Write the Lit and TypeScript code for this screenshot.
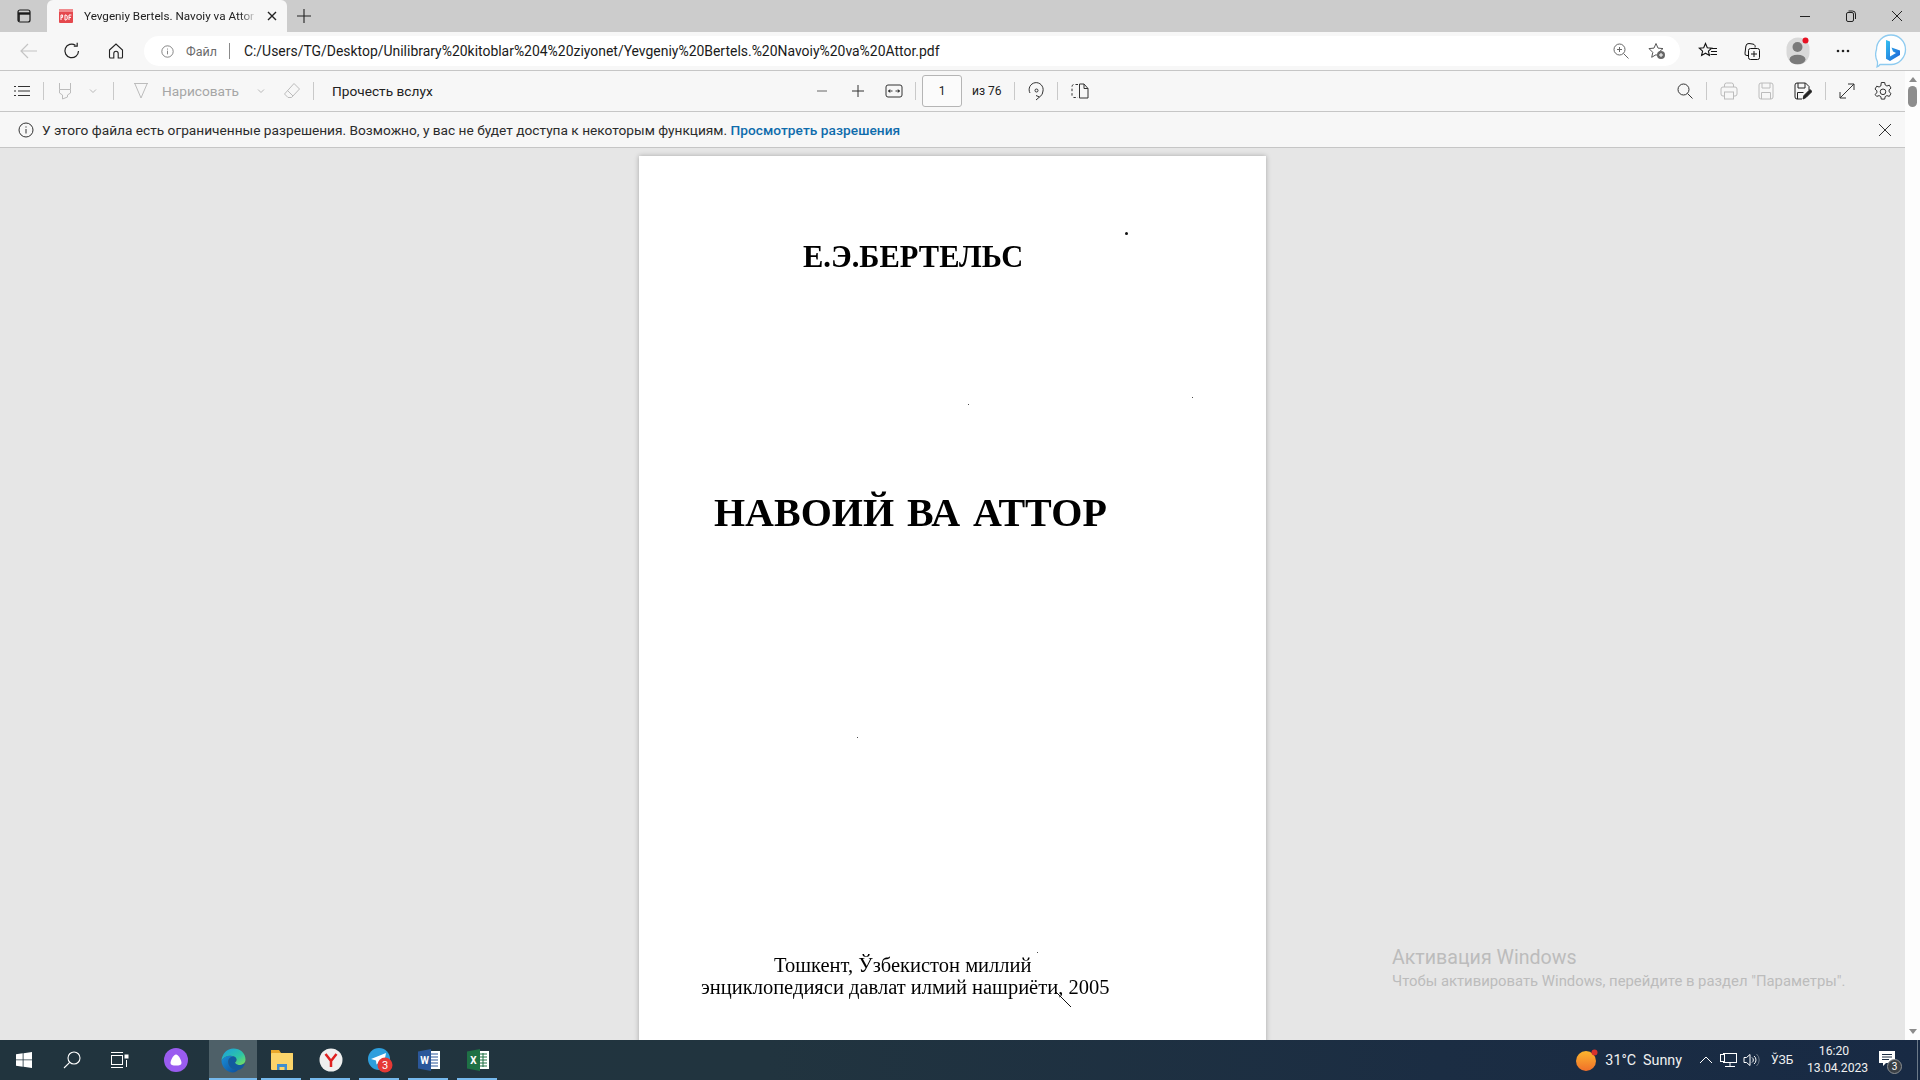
import { LitElement, html, css } from "lit";
import { customElement } from "lit/decorators.js";

const info = (size = 16, color = "#555") => html`<svg width=${size} height=${size} viewBox="0 0 16 16" fill="none" stroke=${color}>
  <circle cx="8" cy="8" r="7"></circle>
  <path d="M8 7v4.5M8 4.4v1.2"></path>
</svg>`;

const chevron = html`<svg width="10" height="10" viewBox="0 0 10 10" fill="none" stroke="#b8b8b8"><path d="M2 3.5l3 3 3-3"></path></svg>`;

@customElement("app-root")
export class AppRoot extends LitElement {
  static styles = css`
    :host {
      display: block;
      width: 1920px;
      height: 1080px;
      overflow: hidden;
      font-family: Roboto, "Liberation Sans", sans-serif;
      color: #222;
      position: relative;
    }
    button {
      all: unset;
      display: flex;
      align-items: center;
      justify-content: center;
    }

    .tabstrip {
      height: 32px;
      background: #ccc;
      display: flex;
      align-items: stretch;
    }
    .sidebar-btn {
      width: 47px;
    }
    .tab {
      width: 240px;
      background: #f7f7f7;
      border-radius: 6px 6px 0 0;
      display: flex;
      align-items: center;
      box-sizing: border-box;
      padding-left: 11px;
    }
    .tab-title {
      width: 173px;
      margin-left: 10px;
      font-size: 11.7px;
      white-space: nowrap;
      -webkit-mask-image: linear-gradient(90deg, #000 90%, transparent);
      mask-image: linear-gradient(90deg, #000 90%, transparent);
    }
    .tab-close {
      margin-left: 10px;
    }
    .new-tab {
      width: 34px;
    }
    .window-btns {
      margin-left: auto;
      display: flex;
    }
    .window-btns button {
      width: 46px;
    }

    .addressbar {
      height: 38px;
      background: #f7f7f7;
      border-bottom: 1px solid #c6c6c6;
      display: flex;
      align-items: center;
    }
    .nav {
      width: 44px;
      height: 30px;
    }
    .nav:first-child {
      width: 50px;
      padding-left: 4px;
      margin-right: -4px;
    }
    .omnibox {
      margin-left: 6px;
      width: 1536px;
      height: 30px;
      background: #fff;
      border-radius: 15px;
      display: flex;
      align-items: center;
      padding-left: 17px;
      box-sizing: border-box;
      flex: none;
    }
    .scheme {
      margin-left: 12px;
      font-size: 12.5px;
      color: #6b6b6b;
    }
    .omni-sep {
      width: 1px;
      height: 16px;
      background: #8a8a8a;
      margin: 0 14px 0 12px;
    }
    .url {
      font-size: 13.95px;
      color: #1a1a1a;
      white-space: nowrap;
    }
    .omni-end {
      margin-left: auto;
      display: flex;
      gap: 12px;
      padding-right: 11px;
    }
    .omni-end button {
      width: 24px;
    }
    .browser-btns {
      display: flex;
      align-items: center;
      margin-left: 5px;
      flex: none;
    }
    .browser-btns button {
      width: 45px;
      height: 36px;
    }
    .browser-btns .collections {
      margin-left: -1px;
      margin-right: 1px;
    }
    .browser-btns .bing {
      margin-left: 3px;
    }

    .body {
      display: flex;
      height: 969px;
    }
    .main {
      width: 1905px;
      display: flex;
      flex-direction: column;
      position: relative;
    }
    .pdfbar {
      height: 40px;
      background: #f7f7f7;
      border-bottom: 1px solid #c6c6c6;
      display: flex;
      align-items: center;
      padding-left: 10px;
      font-size: 13.7px;
      flex: none;
    }
    .pdfbar button {
      width: 24px;
      height: 24px;
      flex: none;
    }
    .sep {
      width: 1px;
      height: 18px;
      background: #c9c9c9;
      margin: 0 9px;
      flex: none;
    }
    .pdfbar .chev {
      width: 16px;
      margin: 0 3px 0 8px;
    }
    .pdfbar .draw {
      margin-left: 6px;
    }
    .draw-label {
      width: 76px;
      margin-left: 9px;
      color: #a6a6a6;
      white-space: nowrap;
    }
    .pdfbar .chev-draw {
      margin: 0 0 0 15px;
    }
    .pdfbar .eraser {
      margin-left: 11px;
    }
    .read {
      margin-left: 9px;
      width: 400px;
      white-space: nowrap;
    }
    .pdfbar .minus {
      margin-left: 78px;
    }
    .pdfbar .plus,
    .pdfbar .fit {
      margin-left: 12px;
    }
    .page-input {
      width: 40px;
      height: 32px;
      box-sizing: border-box;
      border: 1px solid #b5b5b5;
      border-radius: 3px;
      background: #fbfbfb;
      display: flex;
      align-items: center;
      justify-content: center;
      font-size: 12px;
      margin-left: -3px;
      flex: none;
    }
    .page-total {
      width: 33px;
      margin-left: 10px;
      font-size: 12px;
      white-space: nowrap;
    }
    .pdfbar .view {
      margin-left: 1px;
    }
    .pdf-right {
      margin-left: auto;
      display: flex;
      align-items: center;
      padding-right: 10px;
    }
    .pdfbar .print {
      margin-right: 1px;
    }
    .pdf-right .gap {
      margin-left: 12px;
    }
    .pdfbar .save {
      margin-right: 1px;
    }
    .pdfbar .save-as {
      margin-right: 1px;
    }
    .pdf-right .search-sep {
      margin-right: 10px;
    }

    .infobar {
      height: 35px;
      background: #f7f7f7;
      border-bottom: 1px solid #c6c6c6;
      display: flex;
      align-items: center;
      padding-left: 18px;
      font-size: 13.7px;
      flex: none;
      color: #2b2b2b;
    }
    .infobar span {
      margin-left: 8px;
      white-space: nowrap;
    }
    .infobar a {
      color: #0f6cac;
      font-weight: 500;
      letter-spacing: 0.05px;
    }
    .info-close {
      margin-left: auto;
      width: 16px;
      margin-right: 12px;
    }

    .viewer {
      flex: 1;
      background: #e6e6e6;
      display: flex;
      justify-content: center;
      padding: 8px 0 0 0;
      overflow: hidden;
    }
    .page {
      width: 627px;
      height: 1000px;
      flex: none;
      background: #fff;
      box-shadow: 0 0 5px rgba(0, 0, 0, 0.28);
      position: relative;
      font-family: "Liberation Serif", serif;
      color: #000;
      display: flex;
      flex-direction: column;
      box-sizing: border-box;
      padding-top: 83px;
    }
    .author {
      margin-left: 164px;
      font-size: 30.5px;
      line-height: 36px;
      font-weight: bold;
      white-space: nowrap;
      filter: blur(0.3px);
    }
    .book {
      margin: 215px 0 0 75px;
      font-size: 40px;
      line-height: 46px;
      font-weight: bold;
      white-space: nowrap;
      word-spacing: 3px;
      filter: blur(0.3px);
    }
    .imprint {
      margin-top: 419px;
      font-size: 20.5px;
      line-height: 21.5px;
      white-space: nowrap;
      filter: blur(0.35px);
    }
    .imprint div:first-child {
      margin-left: 135px;
    }
    .imprint div:last-child {
      margin-left: 62px;
    }
    .speck {
      position: absolute;
      background: #111;
      border-radius: 50%;
    }
    .slash {
      position: absolute;
      left: 415px;
      top: 834px;
    }
    .watermark {
      position: absolute;
      left: 1392px;
      top: 874px;
      color: #bcbcbc;
      pointer-events: none;
      white-space: nowrap;
    }
    .wm-title {
      font-size: 19.6px;
      line-height: 26px;
    }
    .wm-sub {
      font-size: 14.85px;
      line-height: 20px;
    }

    .scrollbar {
      width: 15px;
      background: #fdfdfd;
      display: flex;
      flex-direction: column;
      align-items: center;
      position: relative;
    }
    .scroll-up {
      margin-top: 6px;
      width: 0;
      height: 0;
      border: 4px solid transparent;
      border-top: 0;
      border-bottom: 5px solid #8c8c8c;
    }
    .thumb {
      margin-top: 4px;
      width: 9px;
      height: 21px;
      background: #8d8d8d;
      border-radius: 5px;
    }
    .scroll-down {
      margin-top: auto;
      margin-bottom: 6px;
      width: 0;
      height: 0;
      border: 4px solid transparent;
      border-bottom: 0;
      border-top: 5px solid #8c8c8c;
    }

    .taskbar {
      height: 40px;
      background: linear-gradient(90deg, #21343e 0%, #21343f 40%, #1b2d43 75%, #182a44 100%);
      display: flex;
      align-items: stretch;
      color: #f0f0f0;
      font-size: 14.3px;
    }
    .tb-btn {
      width: 48px;
      flex: none;
    }
    .tb-alice {
      margin-left: 8px;
    }
    .tb-app {
      width: 49px;
      flex: none;
      position: relative;
    }
    .tb-app::after {
      content: "";
      position: absolute;
      left: 4px;
      right: 5px;
      bottom: 0;
      height: 2px;
      background: #76b9ed;
    }
    .tb-edge {
      width: 48px;
      margin-left: 9px;
      background: #4e6068;
    }
    .tb-edge::after {
      left: 0;
      right: 0;
    }
    .tray {
      margin-left: auto;
      display: flex;
      align-items: center;
    }
    .weather {
      margin-right: 7px;
    }
    .temp {
      margin-right: 7px;
      white-space: nowrap;
    }
    .sunny {
      margin-right: 12px;
      white-space: nowrap;
    }
    .tray-ico {
      width: 23px;
      flex: none;
    }
    .lang {
      margin-left: 8px;
      font-size: 12px;
      width: 22px;
      white-space: nowrap;
    }
    .clock {
      width: 54px;
      margin-left: 14px;
      text-align: center;
      font-size: 12.2px;
      line-height: 17px;
      white-space: nowrap;
    }
    .notif {
      width: 40px;
      margin: 0 10px 0 6px;
      position: relative;
      flex: none;
      align-self: stretch;
    }
    .notif svg {
      margin-bottom: 3px;
    }
    .notif-badge {
      position: absolute;
      left: 20px;
      top: 19px;
      width: 15px;
      height: 15px;
      box-sizing: border-box;
      border-radius: 50%;
      background: #3a3f45;
      border: 1px solid #8b8f93;
      color: #fff;
      font-size: 10px;
      line-height: 13px;
      text-align: center;
    }
    .show-desktop {
      width: 1px;
      align-self: stretch;
      background: #6c7a89;
      margin-right: 2px;
    }
  `;

  render() {
    return html`
      ${this.renderTabs()} ${this.renderAddress()}
      <div class="body">
        <div class="main">
          ${this.renderPdfBar()} ${this.renderInfo()}
          <div class="viewer">${this.renderPage()}</div>
          <div class="watermark">
            <div class="wm-title">Активация Windows</div>
            <div class="wm-sub">Чтобы активировать Windows, перейдите в раздел "Параметры".</div>
          </div>
        </div>
        <div class="scrollbar">
          <div class="scroll-up"></div>
          <div class="thumb"></div>
          <div class="scroll-down"></div>
        </div>
      </div>
      ${this.renderTaskbar()}
    `;
  }

  renderTabs() {
    return html`<div class="tabstrip">
      <button class="sidebar-btn">
        <svg width="14" height="14" viewBox="0 0 14 14" fill="none" stroke="#1a1a1a" stroke-width="1.2">
          <rect x="1" y="1" width="12" height="12" rx="2"></rect>
          <path d="M1 4.5h12" stroke-width="2.4"></path>
          <path d="M2 4v8" stroke-width="1.6"></path>
        </svg>
      </button>
      <div class="tab">
        <svg width="16" height="16" viewBox="0 0 16 16">
          <path d="M1 2a1 1 0 0 1 1-1h12a1 1 0 0 1 1 1v12a1 1 0 0 1-1 1H2a1 1 0 0 1-1-1z" fill="#e5484d"></path>
          <rect x="1" y="1" width="14" height="3" fill="#f08a8d"></rect>
          <path d="M3 7v5M3 7h1.6v2.4H3M7 7v5h1.2l1-1v-3l-1-1zM11 7v5M11 7h2.4M11 9.4h2" fill="none" stroke="#fff" stroke-width="1"></path>
        </svg>
        <div class="tab-title">Yevgeniy Bertels. Navoiy va Attor</div>
        <button class="tab-close">
          <svg width="10" height="10" viewBox="0 0 10 10" stroke="#222" stroke-width="1.4"><path d="M1 1l8 8M9 1l-8 8"></path></svg>
        </button>
      </div>
      <button class="new-tab">
        <svg width="16" height="16" viewBox="0 0 16 16" stroke="#222" stroke-width="1.1"><path d="M8 1v14M1 8h14"></path></svg>
      </button>
      <div class="window-btns">
        <button><svg width="10" height="10" viewBox="0 0 10 10" stroke="#222"><path d="M0 5.5h10"></path></svg></button>
        <button>
          <svg width="10" height="12" viewBox="0 0 10 12" fill="none" stroke="#222">
            <rect x="0.5" y="2.5" width="7" height="9" rx="1.5"></rect>
            <path d="M2.5 1h4a3 3 0 0 1 3 3v5"></path>
          </svg>
        </button>
        <button><svg width="12" height="12" viewBox="0 0 12 12" stroke="#222"><path d="M1 1l10 10M11 1L1 11"></path></svg></button>
      </div>
    </div>`;
  }

  renderAddress() {
    return html`<div class="addressbar">
      <button class="nav">
        <svg width="18" height="16" viewBox="0 0 18 16" fill="none" stroke="#c4c4c4" stroke-width="1.2"><path d="M17 8H1M8 1L1 8l7 7"></path></svg>
      </button>
      <button class="nav">
        <svg width="18" height="18" viewBox="0 0 18 18" fill="none" stroke="#222" stroke-width="1.2">
          <path d="M15.5 9A6.8 6.8 0 1 1 12.4 3.2"></path>
          <path d="M12.8 0.8v3.4H9.4" transform="translate(1.4 0)"></path>
        </svg>
      </button>
      <button class="nav">
        <svg width="16" height="16" viewBox="0 0 16 16" fill="none" stroke="#222" stroke-width="1.1">
          <path d="M1.5 7L8 1l6.5 6v7a1 1 0 0 1-1 1H10.2v-4.5a2.2 2.2 0 0 0-4.4 0V15H2.5a1 1 0 0 1-1-1z"></path>
        </svg>
      </button>
      <div class="omnibox">
        ${info(13, "#6b6b6b")}
        <span class="scheme">Файл</span>
        <span class="omni-sep"></span>
        <span class="url">C:/Users/TG/Desktop/Unilibrary%20kitoblar%204%20ziyonet/Yevgeniy%20Bertels.%20Navoiy%20va%20Attor.pdf</span>
        <div class="omni-end">
          <button>
            <svg width="16" height="16" viewBox="0 0 16 16" fill="none" stroke="#666">
              <circle cx="6.5" cy="6.5" r="5.5"></circle>
              <path d="M10.5 10.5L15.5 15.5M4 6.5h5M6.5 4v5"></path>
            </svg>
          </button>
          <button>
            <svg width="18" height="18" viewBox="0 0 18 18">
              <path d="M8 1.5l2 4.6 5 .5-3.8 3.3 1.1 4.9L8 12.7l-4.300 2.600 1.100-4.900L1 6.600l5-.5z" fill="none" stroke="#555"></path>
              <circle cx="13" cy="13" r="4" fill="#666"></circle>
              <path d="M13 11v4M11 13h4" stroke="#fff"></path>
            </svg>
          </button>
        </div>
      </div>
      <div class="browser-btns">
        <button>
          <svg width="20" height="18" viewBox="0 0 20 18" fill="none" stroke="#111">
            <path d="M7.500 1.500l1.800 4.200 4.400.4-3.300 3 1 4.400-3.900-2.300-3.900 2.300 1-4.400-3.300-3 4.400-.4z" stroke-width="1.100"></path>
            <path d="M14 6.500h5M13 9.500h6M12.500 12.500h6.500"></path>
          </svg>
        </button>
        <button class="collections">
          <svg width="18" height="20" viewBox="0 0 18 20" fill="none" stroke="#111">
            <rect x="5.500" y="7.500" width="11" height="11" rx="2"></rect>
            <path d="M11 10v6M8 13h6M5.500 14.500H4a2 2 0 0 1-2-2.400l.9-7.100A3 3 0 0 1 6 2.500l4 .6a2.500 2.500 0 0 1 2 3.400"></path>
          </svg>
        </button>
        <button>
          <svg width="24" height="28" viewBox="0 0 24 28">
            <rect x="0.5" y="0.5" width="23" height="27" rx="11.500" fill="#d9d9d9"></rect>
            <circle cx="11.500" cy="10" r="5" fill="#7a7a7a"></circle>
            <ellipse cx="11.500" cy="22.500" rx="8" ry="4.800" fill="#7a7a7a"></ellipse>
            <circle cx="19.500" cy="3.500" r="3" fill="#e81123"></circle>
          </svg>
        </button>
        <button>
          <svg width="14" height="4" viewBox="0 0 14 4" fill="#222"><circle cx="2" cy="2" r="1.300"></circle><circle cx="7" cy="2" r="1.300"></circle><circle cx="12" cy="2" r="1.300"></circle></svg>
        </button>
        <button class="bing">
          <svg width="32" height="34" viewBox="0 0 32 34">
            <defs>
              <linearGradient id="bing" x1="0" y1="0" x2="1" y2="1">
                <stop offset="0" stop-color="#35c1f1"></stop>
                <stop offset="1" stop-color="#1a5fd6"></stop>
              </linearGradient>
            </defs>
            <path d="M16 1c8 0 14.500 6.500 14.500 14.500S24 30.500 16 30.500H5c-1.500 2-3 2.500-3 2.500s.8-3 .4-5.500A15 15 0 0 1 1.500 15.500C1.500 7.500 8 1 16 1z" fill="#fff" stroke="#8ecbf0" stroke-width="1.300"></path>
            <path d="M11 6l4 1.500v15l6-3.500-3-1.500-1.500-4 8.500 3v4.500L15 27l-4-2.200z" fill="url(#bing)"></path>
          </svg>
        </button>
      </div>
    </div>`;
  }

  renderPdfBar() {
    return html`<div class="pdfbar">
      <button>
        <svg width="16" height="12" viewBox="0 0 16 12" stroke="#333"><path d="M0 1.500h2M4 1.500h12M0 6h2M4 6h12M0 10.500h2M4 10.500h12"></path></svg>
      </button>
      <span class="sep"></span>
      <button>
        <svg width="16" height="18" viewBox="0 0 16 18" fill="none" stroke="#bcbcbc">
          <path d="M2.500 1v6.500h11V1M2.500 7.500v3.500L5.500 13v4l5-2v-2l3-2V7.500"></path>
        </svg>
      </button>
      <button class="chev">${chevron}</button>
      <span class="sep"></span>
      <button class="draw">
        <svg width="16" height="18" viewBox="0 0 16 18" fill="none" stroke="#bcbcbc"><path d="M1 1.500h14M2 2l6 14 6-14"></path></svg>
      </button>
      <span class="draw-label">Нарисовать</span>
      <button class="chev chev-draw">${chevron}</button>
      <button class="eraser">
        <svg width="18" height="18" viewBox="0 0 18 18" fill="none" stroke="#bcbcbc">
          <path d="M11 1.500l5.500 5.500-8 8.500H5L1.500 12zM4.500 8.500L10 14"></path>
        </svg>
      </button>
      <span class="sep"></span>
      <span class="read">Прочесть вслух</span>
      <button class="minus">
        <svg width="12" height="12" viewBox="0 0 12 12" stroke="#666"><path d="M1 6h10"></path></svg>
      </button>
      <button class="plus">
        <svg width="14" height="14" viewBox="0 0 14 14" stroke="#333"><path d="M7 1v12M1 7h12"></path></svg>
      </button>
      <button class="fit">
        <svg width="18" height="14" viewBox="0 0 18 14" fill="none" stroke="#333">
          <rect x="1" y="1" width="16" height="12" rx="2"></rect>
          <path d="M3.500 7h4M10.500 7h4" stroke-width="1"></path>
          <path d="M5 5.500L3.500 7 5 8.500M13 5.500L14.500 7 13 8.500" fill="#333"></path>
        </svg>
      </button>
      <span class="sep"></span>
      <div class="page-input">1</div>
      <span class="page-total">из 76</span>
      <span class="sep"></span>
      <button>
        <svg width="18" height="20" viewBox="0 0 18 20" fill="none" stroke="#333">
          <path d="M3 12A7 7 0 1 1 16 10a7 7 0 0 1-3.500 6"></path>
          <path d="M9 19l3.500-3-3.500-1.500"></path>
          <circle cx="9.500" cy="9.500" r="1.500"></circle>
        </svg>
      </button>
      <span class="sep"></span>
      <button class="view">
        <svg width="18" height="16" viewBox="0 0 18 16" fill="none" stroke="#333">
          <path d="M7 1.500H3a2 2 0 0 0-2 2v9a2 2 0 0 0 2 2h4" stroke-dasharray="2.500 2"></path>
          <path d="M8.500 1v14H17V5.500L13 1zM13 1v4.500h4"></path>
        </svg>
      </button>
      <div class="pdf-right">
        <button>
          <svg width="16" height="16" viewBox="0 0 16 16" fill="none" stroke="#333">
            <circle cx="6.500" cy="6.500" r="5.500"></circle>
            <path d="M10.500 10.500L15.500 15.500"></path>
          </svg>
        </button>
        <span class="sep search-sep"></span>
        <button class="print">
          <svg width="18" height="18" viewBox="0 0 18 18" fill="none" stroke="#bcbcbc">
            <path d="M4.500 5V3a2 2 0 0 1 2-2h5a2 2 0 0 1 2 2v2"></path>
            <path d="M4.500 14H3a2 2 0 0 1-2-2V7a2 2 0 0 1 2-2h12a2 2 0 0 1 2 2v5a2 2 0 0 1-2 2h-1.500"></path>
            <rect x="4.500" y="10" width="9" height="7"></rect>
          </svg>
        </button>
        <button class="gap save">
          <svg width="16" height="18" viewBox="0 0 16 18" fill="none" stroke="#bcbcbc">
            <path d="M1 3a2 2 0 0 1 2-2h10a2 2 0 0 1 2 2v12a2 2 0 0 1-2 2H3a2 2 0 0 1-2-2z"></path>
            <path d="M4 1v5h8V1M3.500 17v-6.500h9V17"></path>
          </svg>
        </button>
        <button class="gap save-as">
          <svg width="18" height="18" viewBox="0 0 18 18" fill="none" stroke="#222">
            <path d="M8 17H3a2 2 0 0 1-2-2V3a2 2 0 0 1 2-2h8.500L15 4.500V8"></path>
            <path d="M4 1v5h7V1M3.500 17v-6.500h6"></path>
            <path d="M9 17l1-3.500 6-6 2 2-6 6z" fill="#222"></path>
          </svg>
        </button>
        <span class="sep"></span>
        <button>
          <svg width="16" height="16" viewBox="0 0 16 16" fill="none" stroke="#333"><path d="M1 15L15 1M9 1h6v6M1 9v6h6"></path></svg>
        </button>
        <button class="gap">
          <svg width="20" height="20" viewBox="0 0 20 20" fill="none" stroke="#333">
            <path d="M8.300 1.500h3.400l.5 2.500 1.700 1 2.400-.8 1.700 2.900-1.900 1.700v2l1.900 1.700-1.700 2.900-2.400-.8-1.700 1-.5 2.500H8.300l-.5-2.500-1.700-1-2.400.8L2 13.500l1.900-1.700v-2L2 8.100l1.700-2.900 2.400.8 1.700-1z"></path>
            <circle cx="10" cy="10.800" r="2.800"></circle>
          </svg>
        </button>
      </div>
    </div>`;
  }

  renderInfo() {
    return html`<div class="infobar">
      ${info(16, "#333")}
      <span>У этого файла есть ограниченные разрешения. Возможно, у вас не будет доступа к некоторым функциям. <a>Просмотреть разрешения</a></span>
      <button class="info-close">
        <svg width="14" height="14" viewBox="0 0 14 14" stroke="#333"><path d="M1 1l12 12M13 1L1 13"></path></svg>
      </button>
    </div>`;
  }

  renderPage() {
    const specks = [
      [486, 76, 3],
      [329, 248, 1],
      [553, 241, 1],
      [218, 581, 1],
      [398, 796, 1],
    ];
    return html`<div class="page">
      <div class="author">Е.Э.БЕРТЕЛЬС</div>
      <div class="book">НАВОИЙ ВА АТТОР</div>
      <div class="imprint">
        <div>Тошкент, Ўзбекистон миллий</div>
        <div>энциклопедияси давлат илмий нашриёти, 2005</div>
      </div>
      ${specks.map(
        ([x, y, d]) =>
          html`<span class="speck" style="left:${x}px;top:${y}px;width:${d}px;height:${d}px"></span>`,
      )}
      <svg class="slash" width="20" height="20" viewBox="0 0 20 20" fill="none" stroke="#111"><path d="M1 1l16 16"></path></svg>
    </div>`;
  }

  renderTaskbar() {
    return html`<div class="taskbar">
      <button class="tb-btn">
        <svg width="16" height="16" viewBox="0 0 16 16" fill="#fff"><path d="M0 2.300L6.700 1.300V7.500H0zM7.500 1.200L16 0V7.500H7.500zM0 8.300H6.700V14.700L0 13.700zM7.500 8.300H16V16L7.500 14.800z"></path></svg>
      </button>
      <button class="tb-btn">
        <svg width="18" height="18" viewBox="0 0 18 18" fill="none" stroke="#fff" stroke-width="1.100"><circle cx="11" cy="7" r="6"></circle><path d="M6.700 11.300L1 17"></path></svg>
      </button>
      <button class="tb-btn">
        <svg width="18" height="16" viewBox="0 0 18 16" fill="none" stroke="#fff">
          <path d="M0 .5h12M0 15.500h12"></path>
          <rect x=".5" y="3.500" width="11" height="9"></rect>
          <rect x="14" y="3" width="3" height="3" fill="#fff"></rect>
          <path d="M15.500 8v7"></path>
        </svg>
      </button>
      <button class="tb-btn tb-alice">
        <svg width="24" height="24" viewBox="0 0 24 24">
          <circle cx="12" cy="12" r="12" fill="#9a5cf0"></circle>
          <path d="M12 6.500c2.500 0 5.500 6 5.500 8.500 0 2-2 2.500-5.500 2.500S6.500 17 6.500 15c0-2.500 3-8.500 5.500-8.500z" fill="#fff"></path>
        </svg>
      </button>
      <button class="tb-app tb-edge">
        <svg width="25" height="25" viewBox="0 0 25 25">
          <defs>
            <linearGradient id="edgeA" x1="0" y1="0" x2="1" y2="1">
              <stop offset="0" stop-color="#1b9de2"></stop>
              <stop offset=".6" stop-color="#2dc5a5"></stop>
              <stop offset="1" stop-color="#7fe05a"></stop>
            </linearGradient>
            <linearGradient id="edgeB" x1="0" y1="0" x2="1" y2="1">
              <stop offset="0" stop-color="#1a8fd8"></stop>
              <stop offset="1" stop-color="#0c4f9e"></stop>
            </linearGradient>
          </defs>
          <path d="M12.500 .5C19 .5 24.500 5 24.500 11.500c0 4-3.500 5.500-6.500 5.500s-4-1-4-2.500c2-1 2.500-4-1-6C9 6.500 3 8 .5 12.500 1 6 6 .5 12.500 .5z" fill="url(#edgeA)"></path>
          <path d="M.5 12.500C3 8 9 6.500 13 8.500c-4 0-6.500 3-5.500 7 1 4.500 5.500 7 9.500 6.500-1.500 1.500-3 2.500-5 2.500C6 24.500 .5 19 .5 12.500z" fill="url(#edgeB)"></path>
          <path d="M14 14.500c.5 2 3 2.500 5 2.500 2 0 4-.5 5-2-.5 3-3.500 7-7 7-4 .5-8.500-2-9.500-6.500-1-4 1.500-7 5.500-7 3 1 3 3.500 1 6z" fill="#125a9f"></path>
        </svg>
      </button>
      <button class="tb-app">
        <svg width="24" height="22" viewBox="0 0 24 22">
          <path d="M1 1h8l2 3h12v4H1z" fill="#e9a82b"></path>
          <rect x="1" y="4" width="22" height="17" rx="1" fill="#fbd46a"></rect>
          <path d="M7 21v-6h10v6h-2.500v-3h-5v3z" fill="#3f8ecf"></path>
        </svg>
      </button>
      <button class="tb-app">
        <svg width="24" height="24" viewBox="0 0 24 24">
          <circle cx="12" cy="12" r="11.500" fill="#efefef"></circle>
          <path d="M6.500 6l5.500 7v6M17.500 6L12 13" fill="none" stroke="#e02020" stroke-width="2.500"></path>
        </svg>
      </button>
      <button class="tb-app">
        <svg width="26" height="26" viewBox="0 0 26 26">
          <circle cx="12" cy="12" r="11" fill="#2e9fdd"></circle>
          <path d="M4 12l15-6-2.500 13-4.500-3.500-2.500 2-.5-4z" fill="#fff"></path>
          <circle cx="18" cy="18" r="7.500" fill="#e53935"></circle>
          <text x="18" y="22" font-size="11" text-anchor="middle" fill="#fff" font-family="Roboto, sans-serif">3</text>
        </svg>
      </button>
      <button class="tb-app">
        <svg width="22" height="22" viewBox="0 0 22 22">
          <rect x="9" y="2" width="13" height="18" fill="#fff"></rect>
          <path d="M12 5h8M12 8h8M12 11h8M12 14h8M12 17h8" stroke="#2b579a"></path>
          <path d="M0 2.500L13 0v22L0 19.500z" fill="#2b579a"></path>
          <text x="6.500" y="15" font-size="10" font-weight="bold" text-anchor="middle" fill="#fff" font-family="Roboto, sans-serif">W</text>
        </svg>
      </button>
      <button class="tb-app">
        <svg width="22" height="22" viewBox="0 0 22 22">
          <rect x="9" y="2" width="13" height="18" fill="#fff"></rect>
          <path d="M12 5h8M12 8h8M12 11h8M12 14h8M12 17h8M16 4v14" stroke="#1e7145"></path>
          <path d="M0 2.500L13 0v22L0 19.500z" fill="#1e7145"></path>
          <text x="6.500" y="15" font-size="10" font-weight="bold" text-anchor="middle" fill="#fff" font-family="Roboto, sans-serif">X</text>
        </svg>
      </button>
      <div class="tray">
        <svg class="weather" width="22" height="22" viewBox="0 0 22 22">
          <defs>
            <linearGradient id="sun" x1="0" y1="0" x2="0" y2="1">
              <stop offset="0" stop-color="#fcb62e"></stop>
              <stop offset="1" stop-color="#f0702a"></stop>
            </linearGradient>
          </defs>
          <circle cx="10" cy="12" r="10" fill="url(#sun)"></circle>
          <circle cx="18.500" cy="3.500" r="3" fill="#d8322c"></circle>
        </svg>
        <span class="temp">31°C</span>
        <span class="sunny">Sunny</span>
        <button class="tray-ico">
          <svg width="14" height="8" viewBox="0 0 14 8" fill="none" stroke="#fff"><path d="M1 7l6-6 6 6"></path></svg>
        </button>
        <button class="tray-ico">
          <svg width="17" height="14" viewBox="0 0 17 14" fill="none" stroke="#fff">
            <rect x="3.500" y=".5" width="13" height="9"></rect>
            <rect x=".5" y="1.500" width="4" height="7" fill="#1b2d43"></rect>
            <path d="M10 10v3M5 13.500h10"></path>
          </svg>
        </button>
        <button class="tray-ico">
          <svg width="17" height="14" viewBox="0 0 17 14" fill="none" stroke="#fff">
            <path d="M1 4.500h2.500L7 1.500v11L3.500 9.500H1z"></path>
            <path d="M9 4.500a3 3 0 0 1 0 5M11 3a5 5 0 0 1 0 8"></path>
            <path d="M13.500 1a8 8 0 0 1 0 12" stroke="#6b7785"></path>
          </svg>
        </button>
        <span class="lang">ЎЗБ</span>
        <div class="clock"><div>16:20</div><div>13.04.2023</div></div>
        <button class="notif">
          <svg width="16" height="15" viewBox="0 0 16 15" fill="#fff">
            <path d="M0 0h16v12H7l-3 3v-3H0z"></path>
            <path d="M3 3.500h10M3 6h10M3 8.500h7" stroke="#1b2d43"></path>
          </svg>
          <span class="notif-badge">3</span>
        </button>
        <span class="show-desktop"></span>
      </div>
    </div>`;
  }
}
